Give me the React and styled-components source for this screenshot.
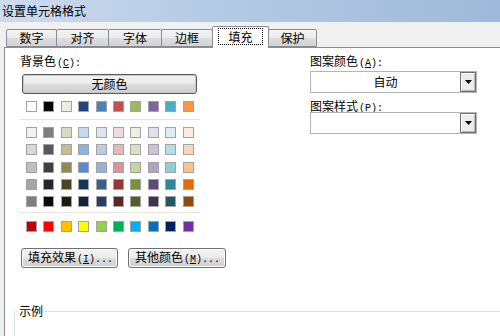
import React from "react";
import styled, { createGlobalStyle } from "styled-components";

const GlobalStyle = createGlobalStyle`
  html, body { margin: 0; padding: 0; background: #f0f0f0; }
  body {
    font-family: "Noto Sans CJK SC", "Noto Sans", sans-serif;
    font-size: 12px;
    line-height: 14px;
    color: #000;
  }
`;

const themeColors = [
  "#ffffff", "#000000", "#eeece1", "#1f497d", "#4f81bd",
  "#c0504d", "#9bbb59", "#8064a2", "#4bacc6", "#f79646",
];

const tints = [
  ["#f2f2f2", "#7f7f7f", "#ddd9c3", "#c6d9f0", "#dbe5f1", "#f2dcdb", "#ebf1dd", "#e5e0ec", "#dbeef3", "#fdeada"],
  ["#d8d8d8", "#595959", "#c4bd97", "#8db3e2", "#b8cce4", "#e5b9b7", "#d7e3bc", "#ccc1d9", "#b7dde8", "#fbd5b5"],
  ["#bfbfbf", "#3f3f3f", "#938953", "#548dd4", "#95b3d7", "#d99694", "#c3d69b", "#b2a2c7", "#92cddc", "#fac08f"],
  ["#a5a5a5", "#262626", "#494429", "#17365d", "#366092", "#953734", "#76923c", "#5f497a", "#31859b", "#e36c09"],
  ["#7f7f7f", "#0c0c0c", "#1d1b10", "#0f243e", "#244061", "#632423", "#4f6128", "#3f3151", "#205867", "#974806"],
];

const standardColors = [
  "#c00000", "#ff0000", "#ffc000", "#ffff00", "#92d050",
  "#00b050", "#00b0f0", "#0070c0", "#002060", "#7030a0",
];

const tabs = [
  { label: "数字", width: 51 },
  { label: "对齐", width: 53 },
  { label: "字体", width: 54 },
  { label: "边框", width: 52 },
  { label: "填充", width: 57, active: true },
  { label: "保护", width: 49 },
];

const Window = styled.div`
  width: 500px;
  height: 336px;
  overflow: hidden;
  display: flex;
  flex-direction: column;
  background: #f0f0f0;
`;

const TitleBar = styled.div`
  height: 22px;
  flex: none;
  display: flex;
  align-items: center;
  padding-left: 2px;
  background: linear-gradient(to right, #cddbee 0%, #b3c9e4 45%, #9fb9da 100%);
`;

const TabStrip = styled.div`
  height: 25px;
  flex: none;
  display: flex;
  align-items: flex-end;
  padding-left: 6px;
  position: relative;
  z-index: 1;
`;

const Tab = styled.div`
  box-sizing: border-box;
  width: ${(p) => p.$w}px;
  height: ${(p) => (p.$active ? 22 : 18)}px;
  margin-right: -1px;
  margin-bottom: ${(p) => (p.$active ? -1 : 0)}px;
  border: 1px solid #898c95;
  border-bottom: ${(p) => (p.$active ? "none" : "1px solid #898c95")};
  border-radius: 2px 2px 0 0;
  background: ${(p) =>
    p.$active
      ? "#ffffff"
      : "linear-gradient(#f4f4f4 0%, #ebebeb 50%, #dedede 50%, #d2d2d2 100%)"};
  display: flex;
  align-items: ${(p) => (p.$active ? "flex-start" : "center")};
  justify-content: center;
  padding-top: ${(p) => (p.$active ? 1 : 0)}px;
  position: relative;
  z-index: ${(p) => (p.$active ? 2 : 1)};
`;

const FocusRing = styled.span`
  box-sizing: border-box;
  width: 45px;
  height: 17px;
  border: 1px dotted #000;
  display: flex;
  align-items: center;
  justify-content: center;
`;

const Panel = styled.div`
  flex: 1;
  margin-left: 4px;
  background: #ffffff;
  border-top: 1px solid #898c95;
  border-left: 1px solid #898c95;
  padding: 6px 0 0 15px;
  display: flex;
  flex-direction: column;
`;

const Columns = styled.div`
  display: grid;
  grid-template-columns: 290px 167px;
`;

const Column = styled.div`
  display: flex;
  flex-direction: column;
  align-items: flex-start;
`;

const Label = styled.div`
  height: 14px;
  margin-top: ${(p) => p.$mt || 0}px;
`;

/* half-width latin part, drawn narrow like the bitmap system font */
const Ascii = styled.span`
  font-family: "Liberation Mono", "DejaVu Sans Mono", monospace;
  font-size: 10px;
  margin-left: 1px;
`;

const Button = styled.button`
  box-sizing: border-box;
  width: ${(p) => p.$w}px;
  height: 20px;
  margin: 0;
  padding: 0 0 0 ${(p) => p.$pl || 0}px;
  font: inherit;
  color: #000;
  text-align: ${(p) => (p.$pl ? "left" : "center")};
  border: 1px solid ${(p) => (p.$default ? "#5a5a5a" : "#707070")};
  border-radius: 3px;
  box-shadow: inset 0 0 0 1px ${(p) => (p.$default ? "#c8c8c8" : "#fcfcfc")};
  background: linear-gradient(#f2f2f2 0%, #ebebeb 50%, #dddddd 50%, #cfcfcf 100%);
`;

const NoColorButton = styled(Button)`
  margin: 6px 0 0 2px;
`;

const SwatchGrid = styled.div`
  display: grid;
  grid-template-columns: repeat(10, 11px);
  column-gap: 6.4px;
  row-gap: 6.25px;
  margin: ${(p) => p.$mt}px 0 0 6px;
`;

const Swatch = styled.div`
  box-sizing: border-box;
  width: 11px;
  height: 11px;
  border: 1px solid #a3a3a3;
  background: ${(p) => p.$c};
`;

const Separator = styled.div`
  width: 180px;
  height: 1px;
  margin-top: ${(p) => p.$mt}px;
  background: #e3e3e3;
`;

const ButtonRow = styled.div`
  display: flex;
  gap: 10px;
  margin-top: 16px;
  margin-left: 1px;
`;

const Select = styled.div`
  box-sizing: border-box;
  width: 167px;
  height: 22px;
  margin-top: ${(p) => p.$mt}px;
  display: flex;
  border: 1px solid #b5b5b5;
  background: #ffffff;
`;

const SelectValue = styled.div`
  flex: 1;
  text-align: center;
  line-height: 20px;
`;

const ArrowButton = styled.div`
  box-sizing: border-box;
  width: 16px;
  height: 20px;
  border: 1px solid #6f6f6f;
  box-shadow: inset 1px 1px 0 #ffffff, inset -1px -1px 0 #b9b9b9;
  background: #ececec;
  display: flex;
  align-items: center;
  justify-content: center;
`;

const Group = styled.fieldset`
  margin: 36px 0 0 -6px;
  padding: 0;
  width: 520px;
  height: 40px;
  border: 1px solid #d5dfe5;
  border-radius: 3px;
`;

const Legend = styled.legend`
  margin-left: 2px;
  padding: 0 2px;
  line-height: 14px;
`;

function Arrow() {
  return (
    <svg width="7" height="4" viewBox="0 0 7 4">
      <path d="M0 0h7L3.5 4z" fill="#000" />
    </svg>
  );
}

function Accel({ k, tail }) {
  return (
    <Ascii>
      (<u>{k}</u>){tail}
    </Ascii>
  );
}

function PatternSelect({ value, mt }) {
  return (
    <Select $mt={mt}>
      <SelectValue>{value}</SelectValue>
      <ArrowButton>
        <Arrow />
      </ArrowButton>
    </Select>
  );
}

export default function App() {
  return (
    <>
      <GlobalStyle />
      <Window>
        <TitleBar>设置单元格格式</TitleBar>
        <TabStrip>
          {tabs.map((t) => (
            <Tab key={t.label} $w={t.width} $active={t.active}>
              {t.active ? <FocusRing>{t.label}</FocusRing> : t.label}
            </Tab>
          ))}
        </TabStrip>
        <Panel>
          <Columns>
            <Column>
              <Label>
                背景色<Accel k="C" tail=":" />
              </Label>
              <NoColorButton $w={175} $default>
                无颜色
              </NoColorButton>
              <SwatchGrid $mt={7}>
                {themeColors.map((c) => (
                  <Swatch key={c} $c={c} />
                ))}
              </SwatchGrid>
              <Separator $mt={7} />
              <SwatchGrid $mt={7}>
                {tints.flat().map((c, i) => (
                  <Swatch key={i} $c={c} />
                ))}
              </SwatchGrid>
              <Separator $mt={5} />
              <SwatchGrid $mt={8}>
                {standardColors.map((c) => (
                  <Swatch key={c} $c={c} />
                ))}
              </SwatchGrid>
              <ButtonRow>
                <Button $w={97} $pl={6}>
                  填充效果<Accel k="I" tail="..." />
                </Button>
                <Button $w={98} $pl={6}>
                  其他颜色<Accel k="M" tail="..." />
                </Button>
              </ButtonRow>
            </Column>
            <Column>
              <Label>
                图案颜色<Accel k="A" tail=":" />
              </Label>
              <PatternSelect value="自动" mt={3} />
              <Label $mt={6}>
                图案样式<Accel k="P" tail=":" />
              </Label>
              <PatternSelect value="" mt={-1} />
            </Column>
          </Columns>
          <Group>
            <Legend>示例</Legend>
          </Group>
        </Panel>
      </Window>
    </>
  );
}
